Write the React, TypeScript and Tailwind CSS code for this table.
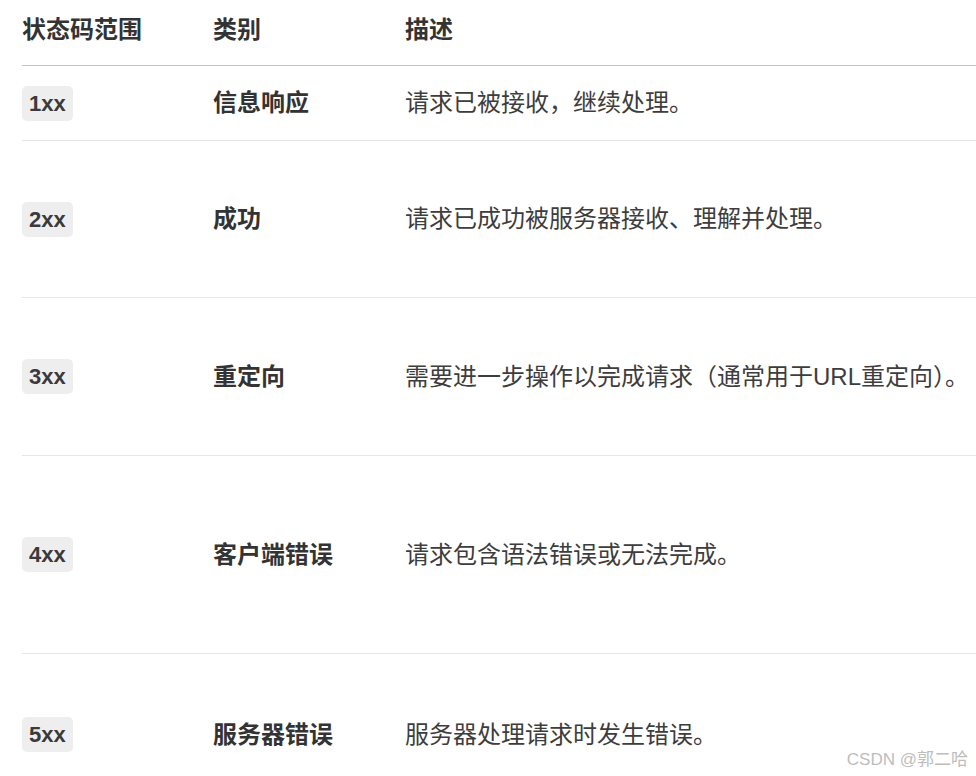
import React from "react";

const rows = [
  { code: "1xx", kind: "信息响应", desc: "请求已被接收，继续处理。", h: "h-[75px]" },
  { code: "2xx", kind: "成功", desc: "请求已成功被服务器接收、理解并处理。", h: "h-[157px]" },
  { code: "3xx", kind: "重定向", desc: "需要进一步操作以完成请求（通常用于URL重定向）。", h: "h-[158px]" },
  { code: "4xx", kind: "客户端错误", desc: "请求包含语法错误或无法完成。", h: "h-[198px]" },
  { code: "5xx", kind: "服务器错误", desc: "服务器处理请求时发生错误。", h: "h-[162px]" },
];

const App = () => {
  return (
    <div
      className="relative w-[976px] h-[776px] overflow-hidden bg-white text-[#333333]"
      style={{ fontFamily: '"Liberation Sans", "Noto Sans CJK SC", sans-serif' }}
    >
      <div className="pl-[22px]">
        {/* Header */}
        <div className="grid grid-cols-[191px_192px_1fr] h-[66px] items-center pb-[5px] border-b border-[#c2c2c2] text-[24px] font-bold">
          <div>状态码范围</div>
          <div>类别</div>
          <div>描述</div>
        </div>

        {/* Rows */}
        {rows.map((r) => (
          <div
            key={r.code}
            className={`grid grid-cols-[191px_192px_1fr] items-center border-b border-[#e6e6e6] ${r.h}`}
          >
            <div>
              <span className="inline-flex items-center h-[35px] px-[7px] rounded-[5px] bg-[#eeeeee] text-[22px] font-bold text-[#3a3a3a]">
                {r.code}
              </span>
            </div>
            <div className="text-[24px] font-bold">{r.kind}</div>
            <div className="text-[24px] whitespace-nowrap text-[#3d3d3d]">{r.desc}</div>
          </div>
        ))}
      </div>

      {/* Watermark */}
      <div className="absolute right-[8px] bottom-[4px] text-[17px] text-[#bdbdbd]">
        CSDN @郭二哈
      </div>
    </div>
  );
};

export default App;
